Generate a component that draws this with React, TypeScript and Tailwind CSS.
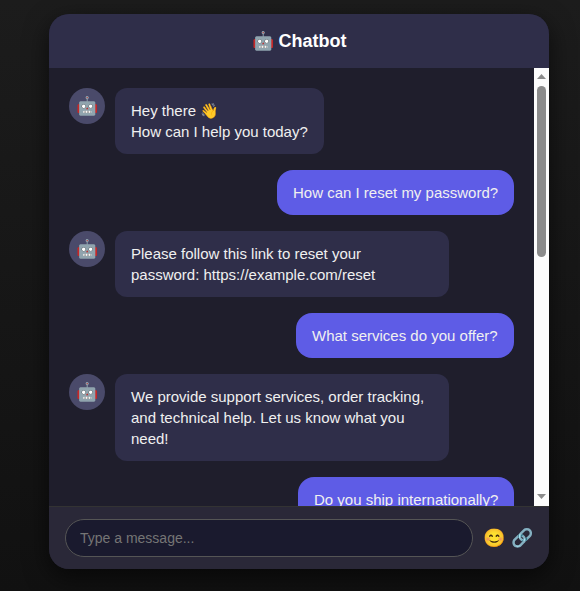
type Message = { from: 'bot' | 'user'; lines: string[]; width: string };

const messages: Message[] = [
  { from: 'bot', lines: ['Hey there 👋', 'How can I help you today?'], width: 'w-[209px]' },
  { from: 'user', lines: ['How can I reset my password?'], width: 'w-[237px]' },
  { from: 'bot', lines: ['Please follow this link to reset your', 'password: https://example.com/reset'], width: 'w-[334px]' },
  { from: 'user', lines: ['What services do you offer?'], width: 'w-[218px]' },
  { from: 'bot', lines: ['We provide support services, order tracking,', 'and technical help. Let us know what you', 'need!'], width: 'w-[334px]' },
  { from: 'user', lines: ['Do you ship internationally?'], width: 'w-[216px]' },
];

function Row({ message }: { message: Message }) {
  const bot = message.from === 'bot';
  return (
    <div className={bot ? 'flex shrink-0 items-start gap-2.5' : 'flex shrink-0 justify-end'}>
      {bot && (
        <div className="flex size-9 shrink-0 items-center justify-center rounded-full bg-[#4a4a6a] text-[18px] leading-[normal]">🤖</div>
      )}
      <div
        className={`${message.width} px-4 py-3 text-[15px] leading-[21px] whitespace-nowrap text-[#f0f0f0] ${
          bot ? 'rounded-[12px] bg-[#2f2e49]' : 'rounded-[16px] bg-[#5e5ce6]'
        }`}
      >
        {message.lines.map((line) => (
          <div key={line}>{line}</div>
        ))}
      </div>
    </div>
  );
}

function Scrollbar() {
  return (
    <div className="flex w-[15px] shrink-0 flex-col items-center bg-[#fcfcfc]">
      <svg width="15" height="18" viewBox="0 0 15 18" fill="#8b8b8b" className="shrink-0">
        <path d="M3 11 7.5 6 12 11Z" />
      </svg>
      <div className="h-[171px] w-[9px] rounded-full bg-[#8b8b8b]" />
      <div className="grow" />
      <svg width="15" height="18" viewBox="0 0 15 18" fill="#8b8b8b" className="shrink-0">
        <path d="M3 6 7.5 11 12 6Z" />
      </svg>
    </div>
  );
}

export default function App() {
  return (
    <main className="flex h-[591px] w-[580px] items-start overflow-hidden bg-linear-to-b from-[#1c1c1c] to-[#111111] pt-3.5 pl-[49px] font-['Liberation_Sans',Arial,sans-serif]">
      <section className="flex h-[555px] w-[500px] flex-col overflow-hidden rounded-[20px] bg-[#1f1e2c] shadow-[0_8px_24px_rgba(0,0,0,0.6)]">
        <header className="flex h-[54px] shrink-0 items-center justify-center bg-[#2f2e49] text-[18px] leading-[normal] font-bold text-white">
          🤖 Chatbot
        </header>
        <div className="flex h-[438px] shrink-0">
          <div className="flex min-w-0 grow flex-col gap-4 overflow-hidden p-5">
            {messages.map((message) => (
              <Row key={message.lines[0]} message={message} />
            ))}
          </div>
          <Scrollbar />
        </div>
        <footer className="flex h-[63px] shrink-0 items-center border-t border-[#333333] bg-[#2a2838] pl-4">
          <input
            className="h-[38px] w-[408px] rounded-[20px] border border-[#555555] bg-[#1a1a2e] px-3.5 text-[14px] text-white outline-none placeholder:text-[#757575]"
            placeholder="Type a message..."
          />
          <span className="ml-2.5 text-[18px] leading-[normal]">😊</span>
          <span className="ml-[5.5px] text-[18px] leading-[normal]">🔗</span>
        </footer>
      </section>
    </main>
  );
}
